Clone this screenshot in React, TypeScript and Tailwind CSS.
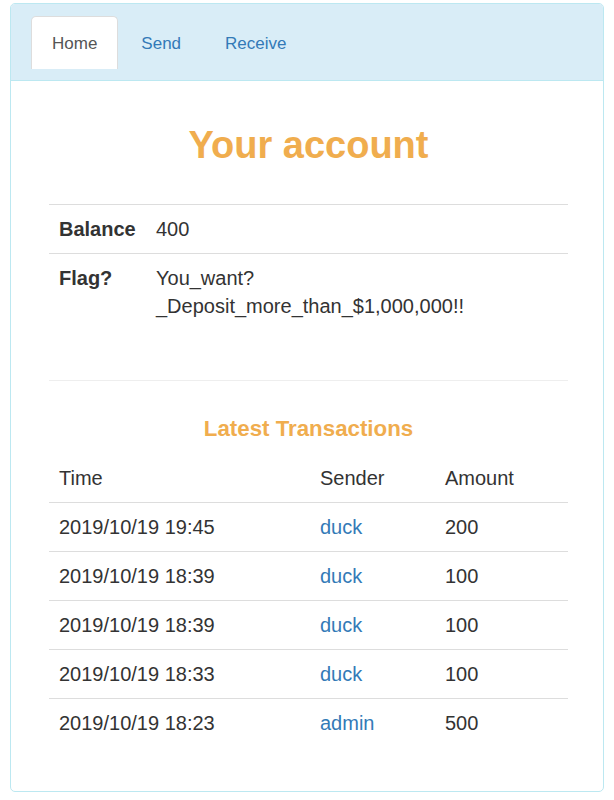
import React from "react";

const transactions = [
  { time: "2019/10/19 19:45", sender: "duck", amount: 200 },
  { time: "2019/10/19 18:39", sender: "duck", amount: 100 },
  { time: "2019/10/19 18:39", sender: "duck", amount: 100 },
  { time: "2019/10/19 18:33", sender: "duck", amount: 100 },
  { time: "2019/10/19 18:23", sender: "admin", amount: 500 },
];

function Tab({ label, active }: { label: string; active?: boolean }) {
  return (
    <li className="mr-[2px]">
      <a
        href="#"
        className={
          active
            ? "flex h-[53px] items-center rounded-t-[5px] border border-b-0 border-[#ddd] bg-white px-5 text-[#555]"
            : "flex h-[53px] items-center rounded-t-[5px] border border-b-0 border-transparent px-5 text-[#337ab7]"
        }
      >
        {label}
      </a>
    </li>
  );
}

export default function App() {
  return (
    <div className="min-h-screen bg-white px-[10px] pt-[3px] font-[family-name:Liberation_Sans,Arial,sans-serif] text-[#333]">
      <div className="rounded-[5px] border border-[#bce8f1]">
        {/* panel heading with tabs */}
        <div className="rounded-t-[4px] border-b border-[#bce8f1] bg-[#d9edf7] px-5 pt-[12px] pb-[11px]">
          <ul className="flex text-[17px] leading-[25px]">
            <Tab label="Home" active />
            <Tab label="Send" />
            <Tab label="Receive" />
          </ul>
        </div>

        <div className="pl-[38px] pr-[35px] pt-[44px] pb-[44px]">
          <h1 className="text-center text-[38px] font-bold leading-[40.7px] text-[#f0ad4e]">
            Your account
          </h1>

          <table className="mt-[38px] w-full table-fixed border-collapse text-[20px] leading-[28px]">
            <colgroup>
              <col className="w-[97px]" />
              <col />
            </colgroup>
            <tbody>
              <tr>
                <th className="border-t border-[#ddd] px-[10px] py-[10px] text-left align-top font-bold">
                  Balance
                </th>
                <td className="border-t border-[#ddd] px-[10px] py-[10px] align-top">400</td>
              </tr>
              <tr>
                <th className="border-t border-[#ddd] px-[10px] py-[10px] text-left align-top font-bold">
                  Flag?
                </th>
                <td className="border-t border-[#ddd] px-[10px] py-[10px] align-top">
                  You_want?
                  <br />
                  _Deposit_more_than_$1,000,000!!
                </td>
              </tr>
            </tbody>
          </table>

          <hr className="mt-[50px] border-t border-[#eee]" />

          <h3 className="mt-[36px] text-center text-[22.3px] font-bold leading-[24.2px] text-[#f0ad4e]">
            Latest Transactions
          </h3>

          <table className="mt-[13px] w-full table-fixed border-collapse text-[20px] leading-[28px]">
            <colgroup>
              <col className="w-[261px]" />
              <col className="w-[125px]" />
              <col />
            </colgroup>
            <thead>
              <tr>
                <th className="px-[10px] py-[10px] text-left font-normal">Time</th>
                <th className="px-[10px] py-[10px] text-left font-normal">Sender</th>
                <th className="px-[10px] py-[10px] text-left font-normal">Amount</th>
              </tr>
            </thead>
            <tbody>
              {transactions.map((t, i) => (
                <tr key={i}>
                  <td className="border-t border-[#ddd] px-[10px] py-[10px]">{t.time}</td>
                  <td className="border-t border-[#ddd] px-[10px] py-[10px]">
                    <a href="#" className="text-[#337ab7]">
                      {t.sender}
                    </a>
                  </td>
                  <td className="border-t border-[#ddd] px-[10px] py-[10px]">{t.amount}</td>
                </tr>
              ))}
            </tbody>
          </table>
        </div>
      </div>
    </div>
  );
}
